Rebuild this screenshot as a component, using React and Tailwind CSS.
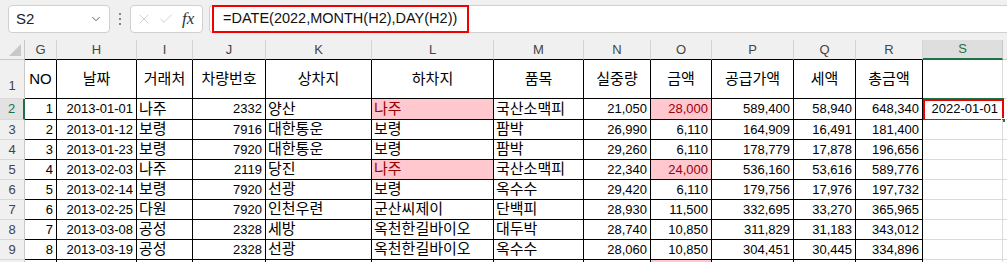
import React from "react";
import { ChevronDown, X, Check } from "lucide-react";

const colW = ["w-[32px]", "w-[80px]", "w-[56px]", "w-[73px]", "w-[106px]", "w-[122px]", "w-[90px]", "w-[67px]", "w-[61px]", "w-[82px]", "w-[62px]", "w-[67px]"];
const letters = ["G", "H", "I", "J", "K", "L", "M", "N", "O", "P", "Q", "R"];
const heads = ["NO", "날짜", "거래처", "차량번호", "상차지", "하차지", "품목", "실중량", "금액", "공급가액", "세액", "총금액"];
const alignRight = [true, true, false, true, false, false, false, true, true, true, true, true];

const rows = [
  [1, "2013-01-01", "나주", "2332", "양산", "나주", "국산소맥피", "21,050", "28,000", "589,400", "58,940", "648,340"],
  [2, "2013-01-12", "보령", "7916", "대한통운", "보령", "팜박", "26,990", "6,110", "164,909", "16,491", "181,400"],
  [3, "2013-01-23", "보령", "7920", "대한통운", "보령", "팜박", "29,260", "6,110", "178,779", "17,878", "196,656"],
  [4, "2013-02-03", "나주", "2119", "당진", "나주", "국산소맥피", "22,340", "24,000", "536,160", "53,616", "589,776"],
  [5, "2013-02-14", "보령", "7920", "선광", "보령", "옥수수", "29,420", "6,110", "179,756", "17,976", "197,732"],
  [6, "2013-02-25", "다원", "7920", "인천우련", "군산씨제이", "단백피", "28,930", "11,500", "332,695", "33,270", "365,965"],
  [7, "2013-03-08", "공성", "2328", "세방", "옥천한길바이오", "대두박", "28,740", "10,850", "311,829", "31,183", "343,012"],
  [8, "2013-03-19", "공성", "2328", "선광", "옥천한길바이오", "옥수수", "28,060", "10,850", "304,451", "30,445", "334,896"],
];

// conditional format highlights: [row index, column index]
const pinkCells = ["0-5", "0-8", "3-5", "3-8", "8-8"];

function RowHeader({ n, h, selected, bottom }) {
  return (
    <div
      className={`w-[25px] shrink-0 ${h} flex justify-center ${bottom ? "items-end pb-[3px]" : "items-center"} border-b border-[#d8d8d8] ${
        selected ? "bg-[#e2e2e2] text-[#1e7145] border-r-2 border-r-[#1e7145]" : "bg-[#f0f0f0] text-[#444] border-r border-r-[#c8c8c8]"
      } text-[13px]`}
    >
      {n}
    </div>
  );
}

function DataRow({ idx, data }) {
  const h = idx === 0 ? "h-[21px]" : "h-[20px]";
  return (
    <div className="flex">
      <RowHeader n={data ? idx + 2 : ""} h={h} selected={idx === 0} />
      {colW.map((w, c) => {
        const isPink = pinkCells.includes(`${idx}-${c}`);
        const korean = c === 2 || c === 4 || c === 5 || c === 6;
        return (
          <div
            key={c}
            className={`${w} shrink-0 ${h} flex items-center border-r border-b border-black overflow-hidden whitespace-nowrap ${
              alignRight[c] ? "justify-end pr-[3px]" : "justify-start pl-[2px]"
            } ${isPink ? "bg-[#ffc7ce] text-[#9c0006]" : "bg-white text-black"} ${korean ? "text-[15px]" : "text-[13px]"}`}
          >
            {data ? data[c] : ""}
          </div>
        );
      })}
      <div className={`w-[80px] shrink-0 ${h} relative flex items-center justify-end pr-[3px] border-r border-b border-[#dadada] bg-white text-[13px] text-black`}>
        {idx === 0 && (
          <>
            <span className="relative z-10 pr-[1px]">2022-01-01</span>
            <span className="absolute left-[0px] top-[-1px] right-[-2px] bottom-[-2px] border-2 border-[#1e7145]" />
            <span className="absolute left-[0px] top-[0px] right-[-2px] bottom-[-2px] border-2 border-[#f00000]" />
            <span className="absolute right-[-4px] bottom-[-4px] w-[5px] h-[5px] bg-[#1e7145] border border-white" />
          </>
        )}
      </div>
      <div className={`flex-1 ${h} border-b border-[#dadada] bg-white`} />
    </div>
  );
}

export default function App() {
  return (
    <div
      className="w-[1007px] h-[262px] overflow-hidden bg-[#f0f0f0] flex flex-col"
      style={{ fontFamily: '"Liberation Sans", "Noto Sans CJK KR", sans-serif' }}
    >
      {/* formula bar */}
      <div className="h-[40px] shrink-0 flex items-start pt-[5px]">
        <div className="ml-[8px] w-[102px] h-[28px] bg-white border border-[#d0d0d0] rounded-[4px] flex items-center justify-between pl-[7px] pr-[6px]">
          <span className="text-[15px] text-[#222]">S2</span>
          <ChevronDown size={14} strokeWidth={1.6} className="text-[#555]" />
        </div>
        <div className="w-[20px] h-[28px] flex flex-col items-center justify-center gap-[3px]">
          <span className="w-[2px] h-[2px] bg-[#888]" />
          <span className="w-[2px] h-[2px] bg-[#888]" />
          <span className="w-[2px] h-[2px] bg-[#888]" />
        </div>
        <div className="w-[73px] h-[28px] bg-white border border-[#d0d0d0] rounded-[4px] flex items-center pl-[5px] gap-[6px]">
          <X size={16} strokeWidth={1.2} className="text-[#c4c4c4]" />
          <Check size={16} strokeWidth={1.2} className="text-[#c4c4c4]" />
          <span className="text-[17px] italic text-[#333] ml-[2px]" style={{ fontFamily: '"Liberation Serif", serif' }}>
            fx
          </span>
        </div>
        <div className="ml-[6px] flex-1 h-[28px] bg-white border border-[#d0d0d0] border-r-0 rounded-l-[4px] flex items-center pl-[2px]">
          <div className="h-[28px] w-[257px] -mt-[1px] border-2 border-[#f00000] flex items-center pl-[9px] text-[14.5px] text-[#111] whitespace-nowrap">
            =DATE(2022,MONTH(H2),DAY(H2))
          </div>
        </div>
      </div>

      {/* column headers */}
      <div className="flex h-[20px] shrink-0">
        <div className="w-[25px] shrink-0 h-[20px] bg-[#f0f0f0] border-r border-b border-[#c8c8c8] relative">
          <span className="absolute right-[3px] bottom-[3px] w-0 h-0 border-l-[12px] border-l-transparent border-b-[12px] border-b-[#c8c8c8]" />
        </div>
        {colW.map((w, c) => (
          <div
            key={c}
            className={`${w} shrink-0 h-[20px] flex items-center justify-center bg-[#f0f0f0] text-[#444] text-[13px] border-r border-r-[#d4d4d4] border-b border-b-black`}
          >
            {letters[c]}
          </div>
        ))}
        <div className="w-[80px] shrink-0 h-[20px] flex items-center justify-center bg-[#dedede] text-[#1e7145] text-[13px] border-r border-r-[#c8c8c8] border-b-2 border-b-[#1e7145]">
          S
        </div>
        <div className="flex-1 h-[20px] bg-[#f0f0f0] border-b border-[#c8c8c8]" />
      </div>

      {/* row 1 : table headers */}
      <div className="flex">
        <RowHeader n={1} h="h-[39px]" bottom />
        {colW.map((w, c) => (
          <div
            key={c}
            className={`${w} shrink-0 h-[39px] flex items-center justify-center bg-white text-black text-[15px] border-r border-b border-black whitespace-nowrap`}
          >
            {heads[c]}
          </div>
        ))}
        <div className="w-[80px] shrink-0 h-[39px] bg-white border-r border-r-[#dadada] border-b border-b-black" />
        <div className="flex-1 h-[39px] bg-white border-b border-[#dadada]" />
      </div>

      {rows.map((r, i) => (
        <DataRow key={i} idx={i} data={r} />
      ))}
      <DataRow idx={8} data={null} />
    </div>
  );
}
